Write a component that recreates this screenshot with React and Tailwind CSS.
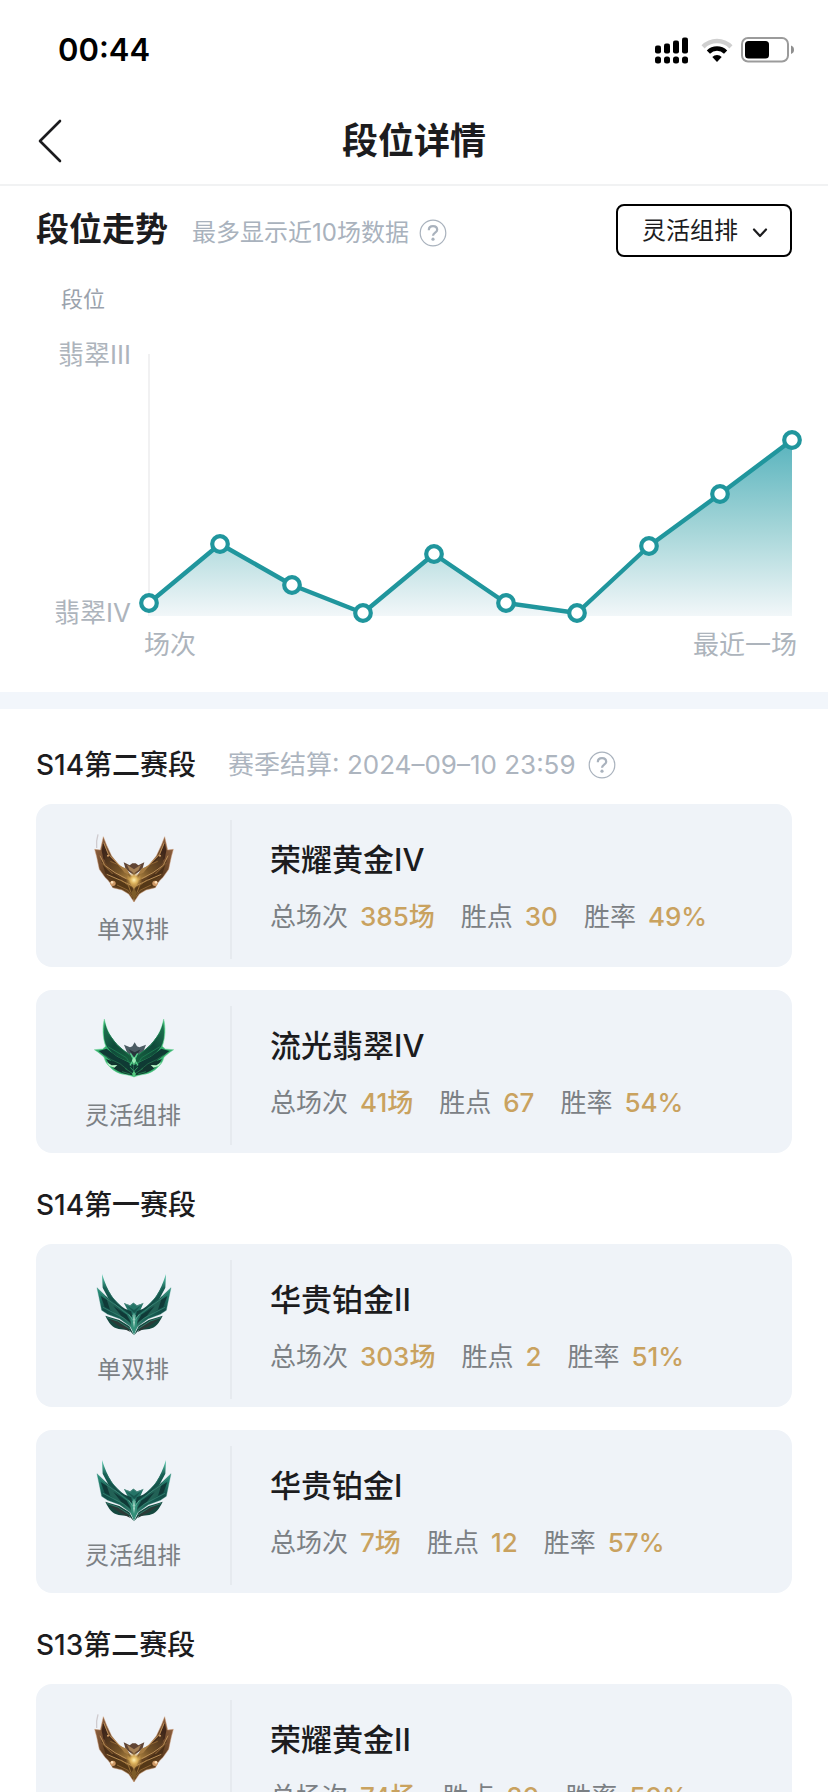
const FONT = "font-[Inter,'Noto_Sans_CJK_SC',sans-serif]";

const games = [
  { x: 18, y: 264 },
  { x: 89, y: 205 },
  { x: 161, y: 246 },
  { x: 232, y: 274 },
  { x: 303, y: 215 },
  { x: 375, y: 264 },
  { x: 446, y: 274 },
  { x: 518, y: 207 },
  { x: 589, y: 155 },
  { x: 661, y: 101 },
];

const seasons = [
  {
    name: "S14第二赛段",
    settle: "赛季结算: 2024–09–10 23:59",
    ranks: [
      { queue: "单双排", tier: "gold", title: "荣耀黄金IV", total: "385场", points: "30", rate: "49%" },
      { queue: "灵活组排", tier: "emerald", title: "流光翡翠IV", total: "41场", points: "67", rate: "54%" },
    ],
  },
  {
    name: "S14第一赛段",
    ranks: [
      { queue: "单双排", tier: "platinum", title: "华贵铂金II", total: "303场", points: "2", rate: "51%" },
      { queue: "灵活组排", tier: "platinum", title: "华贵铂金I", total: "7场", points: "12", rate: "57%" },
    ],
  },
  {
    name: "S13第二赛段",
    ranks: [
      { queue: "单双排", tier: "gold", title: "荣耀黄金II", total: "74场", points: "20", rate: "50%" },
    ],
  },
];

function Mirrored({ children }) {
  return (
    <>
      <g>{children}</g>
      <g transform="matrix(-1 0 0 1 324 0)">{children}</g>
    </>
  );
}

function GoldEmblem() {
  return (
    <svg viewBox="27 24 264 228" className="h-[76px] w-[88px]" aria-hidden="true">
      <defs>
        <linearGradient id="goldBase" x1="0" y1="0" x2="1" y2="1">
          <stop offset="0" stopColor="#9a6a48" />
          <stop offset="0.45" stopColor="#5c3b1e" />
          <stop offset="1" stopColor="#6b4a20" />
        </linearGradient>
        <linearGradient id="goldPlate" x1="0" y1="0" x2="1" y2="1">
          <stop offset="0" stopColor="#40281a" />
          <stop offset="0.6" stopColor="#765428" />
          <stop offset="1" stopColor="#b88c46" />
        </linearGradient>
        <radialGradient id="goldGlow">
          <stop offset="0" stopColor="#fff0b0" />
          <stop offset="0.4" stopColor="#e0b65f" />
          <stop offset="1" stopColor="#b98a3e" stopOpacity="0" />
        </radialGradient>
      </defs>
      <path d="M54 43Q48 62 50 84" fill="none" stroke="#cfcbcf" strokeWidth="4" />
      <path d="M131 127L149 136L157 130H167L175 136L193 127L187 148L162 166L137 148Z" fill="#5f4434" />
      <path d="M141 134L162 148L183 134L176 150L162 160L148 150Z" fill="#a37f55" />
      <Mirrored>
        <path d="M70 50L61 90L44 88L50 110L58 148L75 172L84 181L91 190L98 203L126 210L146 222L162 246V176L138 150L118 136L95 108L80 76Z" fill="url(#goldBase)" stroke="#cf9f7c" strokeWidth="1.500" />
        <path d="M70 66L84 104L106 130L92 134L70 116L65 92Z" fill="#40271a" />
        <path d="M72 96L104 129L143 160L154 184L126 172L98 151L76 128Z" fill="url(#goldPlate)" />
        <path d="M62 116L84 151L112 169L144 192L110 184L78 164Z" fill="#4b3018" />
        <path d="M90 168L128 183L157 202L162 235L140 211L107 199Z" fill="#553817" />
        <path d="M71 68L85 102L114 132L143 158M60 107L74 136L105 158L139 176M80 163L122 181L155 197" fill="none" stroke="#bf935a" strokeWidth="2.800" />
        <path d="M91 124L112 133L130 149M66 130L98 162M111 195L144 211L158 232" fill="none" stroke="#996d38" strokeWidth="2.500" />
        <path d="M116 136L140 146L151 166L134 158Z" fill="#a67c42" />
        <path d="M122 179L145 196L153 218" fill="none" stroke="#a87c3f" strokeWidth="2.500" />
        <circle cx="99" cy="190" r="8" fill="#d09a66" />
        <circle cx="96" cy="187" r="4" fill="#ffe0b8" />
        <circle cx="84" cy="107" r="3" fill="#dba46d" />
      </Mirrored>
      <path d="M162 164L175 180L170 197L162 207L154 197L149 180Z" fill="#b98f4b" />
      <circle cx="162" cy="180" r="25" fill="url(#goldGlow)" />
      <path d="M162 205L171 219L162 240L153 219Z" fill="#7d5c28" />
    </svg>
  );
}

function EmeraldEmblem() {
  return (
    <svg viewBox="27 27 264 228" className="h-[76px] w-[88px]" aria-hidden="true">
      <defs>
        <linearGradient id="emeraldWing" x1="0" y1="0" x2="1" y2="1">
          <stop offset="0" stopColor="#1f7a52" />
          <stop offset="0.45" stopColor="#0f4a3a" />
          <stop offset="1" stopColor="#17633f" />
        </linearGradient>
      </defs>
      <path d="M132 119L150 127L157 124L164 112L171 124L178 127L198 119L188 145L164 165L142 145Z" fill="#4b5b63" />
      <path d="M146 133L164 142L182 133L164 158Z" fill="#27343b" />
      <Mirrored>
        <path d="M73 42C67 68 67 94 77 124L68 132L43 134C56 142 65 150 72 157C75 169 81 179 89 185C98 195 113 205 130 208C145 210 155 213 162 216V162L146 146C113 130 81 90 73 42Z" fill="#35b06d" stroke="#6fd59a" strokeWidth="1.500" />
        <path d="M75 54C84 92 112 125 152 150L162 176C130 166 97 150 81 125C70 104 70 80 75 54Z" fill="url(#emeraldWing)" />
        <path d="M56 138L80 131L112 155L162 180V208L121 189L82 158Z" fill="#0f3a34" />
        <path d="M78 162L112 174L150 196L162 211C126 208 97 196 78 162Z" fill="#12352f" />
        <path d="M73 150L94 164L120 176L142 194" fill="none" stroke="#2a7a50" strokeWidth="2" />
        <path d="M84 125L111 141L139 158L155 184M83 82L111 120L149 151" fill="none" stroke="#1f7e54" strokeWidth="2.500" />
        <path d="M79 171L95 181L112 180L103 188L88 183Z" fill="#b9f6c8" />
        <path d="M135 190L160 207M126 200L150 207" stroke="#238252" strokeWidth="2.500" />
      </Mirrored>
      <path d="M151 145L174 181M173 145L150 181" fill="none" stroke="#55cf8b" strokeWidth="4" />
      <path d="M151 187L162 199L173 187" fill="none" stroke="#2f9a60" strokeWidth="3" />
      <path d="M162 155L168 166L162 178L156 166Z" fill="#9debb9" />
      <path d="M162 197L168 207L162 216L156 207Z" fill="#58c981" />
    </svg>
  );
}

function PlatinumEmblem() {
  return (
    <svg viewBox="27 24 264 228" className="h-[76px] w-[88px]" aria-hidden="true">
      <defs>
        <linearGradient id="platWing" x1="0" y1="0" x2="1" y2="1">
          <stop offset="0" stopColor="#2c9a82" />
          <stop offset="0.35" stopColor="#124d47" />
          <stop offset="0.7" stopColor="#1c6659" />
          <stop offset="1" stopColor="#3b917d" />
        </linearGradient>
        <linearGradient id="platTip" x1="0" y1="0" x2="0" y2="1">
          <stop offset="0" stopColor="#5fd3b6" />
          <stop offset="0.3" stopColor="#176054" />
          <stop offset="1" stopColor="#0f3836" />
        </linearGradient>
      </defs>
      <path d="M132 130L150 136L160 128L171 136L190 130L181 151L162 172L143 151Z" fill="#247467" />
      <path d="M141 137L162 150L181 137L163 160Z" fill="#185850" />
      <path d="M132 130L151 138L160 129L171 138L190 130" fill="none" stroke="#5a8f87" strokeWidth="2.500" />
      <Mirrored>
        <path d="M66 42L68 83L88 121L121 145L148 171L160 186L154 154L135 146C102 126 83 95 66 42Z" fill="url(#platTip)" />
        <path d="M51 83L57 112L65 151L83 163L119 176L150 199L162 217V180L144 160L108 135L77 108Z" fill="url(#platWing)" stroke="#2f8472" strokeWidth="1" />
        <path d="M62 108L94 128L124 154L104 156L74 140Z" fill="#103a38" />
        <path d="M77 109L108 139L149 177L157 200L126 174L90 149" fill="#226256" />
        <path d="M100 138L140 164L153 188L124 168Z" fill="#103a38" />
        <path d="M76 167L90 172L118 180L148 199L162 226L148 211L116 207C97 202 87 190 76 167Z" fill="#15483f" />
        <path d="M86 177L116 185L142 202L151 216L117 199Z" fill="#2b3a37" />
        <path d="M58 93L79 116L109 137L147 166M69 142L98 157L131 174L158 201M80 172L113 183L149 206" fill="none" stroke="#3f8f7c" strokeWidth="2" />
        <path d="M74 76L96 111L126 142" fill="none" stroke="#2a7567" strokeWidth="2" />
      </Mirrored>
      <path d="M162 158L172 177L169 207L162 225L155 207L152 177Z" fill="#35907a" />
      <path d="M162 157L165 184L162 203L159 183Z" fill="#b5ddd0" />
      <path d="M146 163L162 185L178 163" fill="none" stroke="#62b09b" strokeWidth="2.500" />
    </svg>
  );
}

const emblems = { gold: GoldEmblem, emerald: EmeraldEmblem, platinum: PlatinumEmblem };

function HelpButton({ label }) {
  return (
    <button type="button" aria-label={label} className="shrink-0">
      <svg viewBox="0 0 28 28" className="size-7" fill="none" stroke="#a9b2bd" aria-hidden="true">
        <circle cx="14" cy="14" r="12.8" strokeWidth="1.2" />
        <path d="M9.800 11.200C9.800 8.600 11.500 7.200 14 7.200C16.500 7.200 18.200 8.700 18.200 10.800C18.200 13.600 14 13.800 14 16.800" strokeWidth="2.200" />
        <circle cx="14" cy="20.200" r="1.600" fill="#a9b2bd" stroke="none" />
      </svg>
    </button>
  );
}

function StatusBar() {
  return (
    <div className="flex h-[100px] shrink-0 items-center justify-between pl-[58px] pr-[33px]">
      <span className="text-[31px] font-semibold leading-10 text-black">00:44</span>
      <div className="flex items-center">
        <svg viewBox="0 0 34 27" className="mr-3 h-[27px] w-[34px]" aria-hidden="true">
          <rect x="0" y="8.500" width="6" height="8" rx="2" />
          <rect x="9" y="6.500" width="6" height="10" rx="2" />
          <rect x="18" y="3.500" width="6" height="13" rx="2" />
          <rect x="27" y="0.500" width="6" height="16" rx="2" />
          <rect x="0" y="19.500" width="6" height="7" rx="2.500" />
          <rect x="9" y="19.500" width="6" height="7" rx="2.500" />
          <rect x="18" y="19.500" width="6" height="7" rx="2.500" />
          <rect x="27" y="19.500" width="6" height="7" rx="2.500" />
        </svg>
        <svg viewBox="0 0 32 25" className="mr-2 h-[25px] w-8" aria-hidden="true">
          <path d="M0.500 7.200A22 22 0 0 1 31.500 7.200L28.400 10.400A17.600 17.600 0 0 0 3.600 10.400Z" fill="#cfcfcf" />
          <path d="M5.800 12.400A14.500 14.500 0 0 1 26.200 12.400L23 15.700A10 10 0 0 0 9 15.700Z" />
          <path d="M11.300 19A6.800 6.800 0 0 1 20.700 19L16 24Z" />
        </svg>
        <svg viewBox="0 0 54 26" className="h-[26px] w-[54px]" aria-hidden="true">
          <rect x="1" y="1" width="46" height="23.500" rx="6" fill="none" stroke="#9b9b9b" strokeWidth="2" />
          <rect x="4" y="4" width="24" height="17.500" rx="3.500" />
          <path d="M50 8.500Q53 9.500 53 12.800Q53 16 50 17Z" fill="#8f8f8f" />
        </svg>
      </div>
    </div>
  );
}

function TrendChart() {
  const line = games.map((p) => `${p.x},${p.y}`).join(" ");
  return (
    <div className="pt-[26px] text-[26px] leading-8 text-[#adb4bc]">
      <p className="pl-[61px] text-[22px] text-[#9aa2ac]">段位</p>
      <div className="mt-6 flex">
        <div className="flex w-[131px] shrink-0 flex-col justify-between text-right">
          <span>翡翠III</span>
          <span>翡翠IV</span>
        </div>
        <svg viewBox="0 0 697 290" className="min-w-0 flex-1" role="img" aria-label="段位走势">
          <defs>
            <linearGradient id="trendFill" gradientUnits="userSpaceOnUse" x1="0" y1="101" x2="0" y2="277">
              <stop offset="0" stopColor="#58b3bd" />
              <stop offset="0.5" stopColor="#a4d5d8" />
              <stop offset="1" stopColor="#f2f7f9" />
            </linearGradient>
          </defs>
          <path d="M18 15V277" stroke="#ececee" strokeWidth="1.500" />
          <polygon points={`18,277 ${line} 661,277`} fill="url(#trendFill)" />
          <polyline points={line} fill="none" stroke="#20969d" strokeWidth="4.400" strokeLinejoin="round" />
          {games.map((p) => (
            <circle key={p.x} cx={p.x} cy={p.y} r="7.800" fill="#fff" stroke="#20969d" strokeWidth="4.200" />
          ))}
        </svg>
      </div>
      <div className="flex justify-between pl-[144px] pr-[31px]">
        <span>场次</span>
        <span>最近一场</span>
      </div>
    </div>
  );
}

function Stat({ label, value }) {
  return (
    <div className="flex gap-3">
      <dt className="text-[#7b8084]">{label}</dt>
      <dd className="font-medium text-[#c9a25f]">{value}</dd>
    </div>
  );
}

function RankCard({ rank }) {
  const Emblem = emblems[rank.tier];
  return (
    <li className="flex rounded-2xl bg-[#eff3f8] pb-2 pt-4">
      <div className="flex w-[196px] shrink-0 flex-col items-center border-r-2 border-[#e6eaef] pb-[13px] pt-2">
        <Emblem />
        <span className="mt-[10px] text-2xl text-[#7b8084]">{rank.queue}</span>
      </div>
      <div className="pl-[38px] pt-5">
        <h3 className="text-[31px] font-medium leading-10 text-[#1c1c1e]">{rank.title}</h3>
        <dl className="mt-[17px] flex gap-[26px] text-[26px] leading-10">
          <Stat label="总场次" value={rank.total} />
          <Stat label="胜点" value={rank.points} />
          <Stat label="胜率" value={rank.rate} />
        </dl>
      </div>
    </li>
  );
}

export default function App() {
  return (
    <div className={`${FONT} flex h-screen flex-col overflow-hidden bg-white`} lang="zh-CN">
      <StatusBar />
      <header className="grid h-[86px] shrink-0 grid-cols-[1fr_auto_1fr] items-center border-b-2 border-[#f1f2f3] px-9 pb-[3px]">
        <button type="button" aria-label="返回" className="justify-self-start">
          <svg viewBox="0 0 28 44" className="h-11 w-7" fill="none" stroke="#1c1c1e" strokeWidth="2.600" strokeLinecap="round" strokeLinejoin="round" aria-hidden="true">
            <path d="M24 2L4 22L24 42" />
          </svg>
        </button>
        <h1 className="text-[36px] font-bold leading-10 text-[#1c1c1e]">段位详情</h1>
      </header>

      <main className="min-h-0 flex-1 overflow-y-auto [scrollbar-width:none]">
        <section className="border-b-[17px] border-[#f2f6fb] pb-[31px] pt-[18px]">
          <div className="flex items-center justify-between px-9">
            <div className="flex items-baseline pb-1">
              <h2 className="text-[33px] font-bold leading-10 text-[#1c1c1e]">段位走势</h2>
              <div className="ml-6 flex items-center gap-[10px]">
                <p className="text-2xl text-[#a9b2bd]">最多显示近10场数据</p>
                <HelpButton label="走势说明" />
              </div>
            </div>
            <div className="relative">
              <select aria-label="排位类型" className="h-[53px] w-[176px] appearance-none rounded-lg border-2 border-black bg-white pl-6 text-2xl text-[#1c1c1e]">
                <option>灵活组排</option>
                <option>单双排</option>
              </select>
              <svg viewBox="0 0 16 10" className="pointer-events-none absolute right-6 top-6 h-[10px] w-4" fill="none" stroke="#1c1c1e" strokeWidth="2.200" strokeLinecap="round" strokeLinejoin="round" aria-hidden="true">
                <path d="M2 1.500L8 8L14 1.500" />
              </svg>
            </div>
          </div>
          <TrendChart />
        </section>

        <div className="px-9 pb-9 pt-1">
          {seasons.map((season) => (
            <section key={season.name}>
              <div className="flex h-[91px] items-center pt-3">
                <h2 className="text-[28px] font-medium leading-10 text-[#1c1c1e]">{season.name}</h2>
                {season.settle && (
                  <>
                    <p className="ml-8 mr-3 text-[26px] text-[#adb5bf]">{season.settle}</p>
                    <HelpButton label="结算说明" />
                  </>
                )}
              </div>
              <ul className="flex flex-col gap-[23px]">
                {season.ranks.map((rank) => (
                  <RankCard key={rank.queue} rank={rank} />
                ))}
              </ul>
            </section>
          ))}
        </div>
      </main>
    </div>
  );
}
